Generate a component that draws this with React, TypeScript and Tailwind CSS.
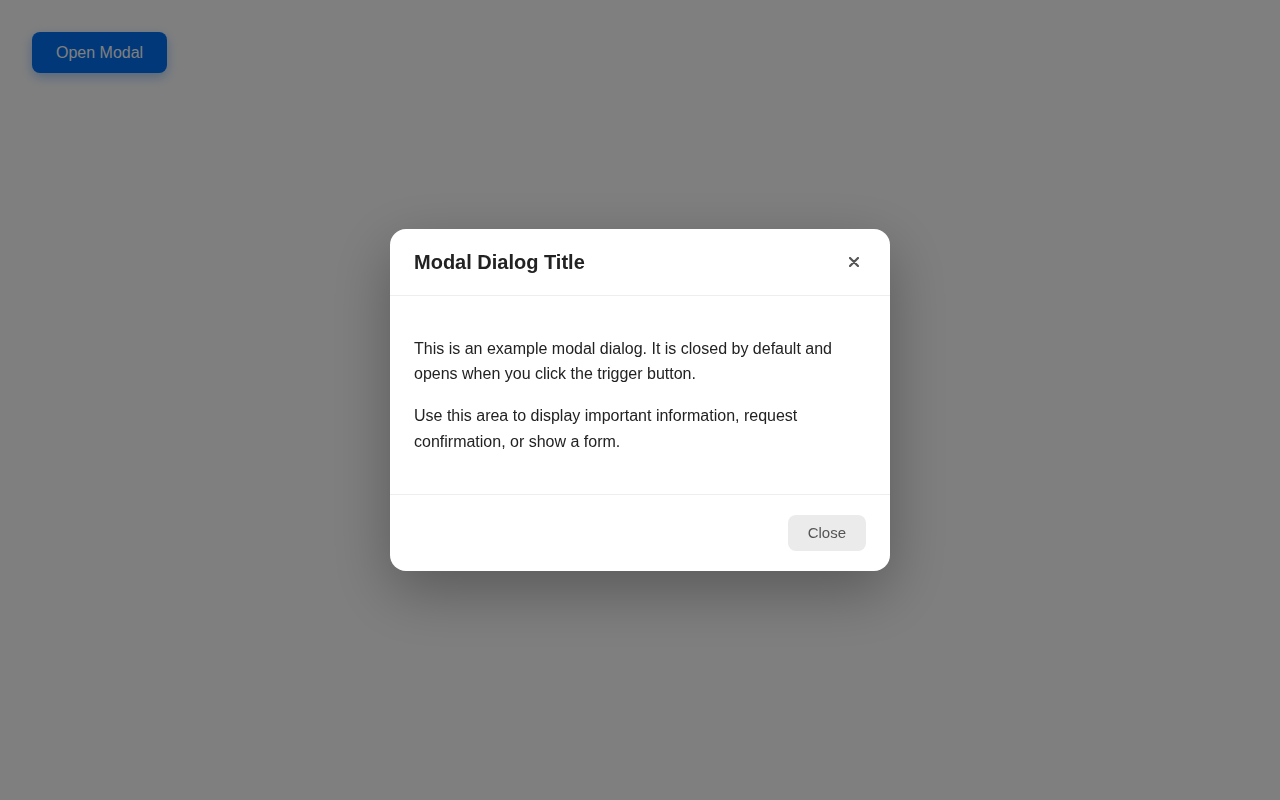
import { useState } from 'react';

export default function App() {
  const [open, setOpen] = useState(true);

  return (
    <div
      className="relative min-h-screen w-full bg-white p-8"
      style={{ fontFamily: '"Liberation Sans", Arial, sans-serif' }}
    >
      <button
        onClick={() => setOpen(true)}
        className="rounded-lg bg-[#0070f3] px-6 py-[11px] text-base leading-[19px] text-white shadow-[0_4px_12px_rgba(0,112,243,0.35)]"
      >
        Open Modal
      </button>

      {open && (
        <div className="fixed inset-0 z-50 flex items-center justify-center bg-[rgba(0,0,0,0.5)]">
          <div className="w-[500px] overflow-hidden rounded-2xl bg-white shadow-[0_20px_60px_rgba(0,0,0,0.3)]">
            <div className="flex items-center justify-between border-b border-[#eeeeee] px-6 py-5">
              <h2 className="text-xl font-bold leading-[26px] text-[#222222]">Modal Dialog Title</h2>
              <button
                onClick={() => setOpen(false)}
                className="flex h-6 w-6 items-center justify-center text-[#555555]"
                aria-label="Close"
              >
                <svg width="10" height="10" viewBox="0 0 10 10">
                  <path d="M1 1 L9 9 M9 1 L1 9" stroke="currentColor" strokeWidth="2.2" strokeLinecap="round" />
                </svg>
              </button>
            </div>
            <div className="px-6 py-6 text-base leading-[25.6px] text-[#222222]">
              <p className="my-4">
                This is an example modal dialog. It is closed by default and opens when you click the trigger button.
              </p>
              <p className="my-4">
                Use this area to display important information, request confirmation, or show a form.
              </p>
            </div>
            <div className="flex justify-end border-t border-[#eeeeee] px-6 py-5">
              <button
                onClick={() => setOpen(false)}
                className="rounded-lg bg-[#ebebeb] px-5 py-2 text-[15px] leading-[20px] text-[#555555]"
              >
                Close
              </button>
            </div>
          </div>
        </div>
      )}
    </div>
  );
}
